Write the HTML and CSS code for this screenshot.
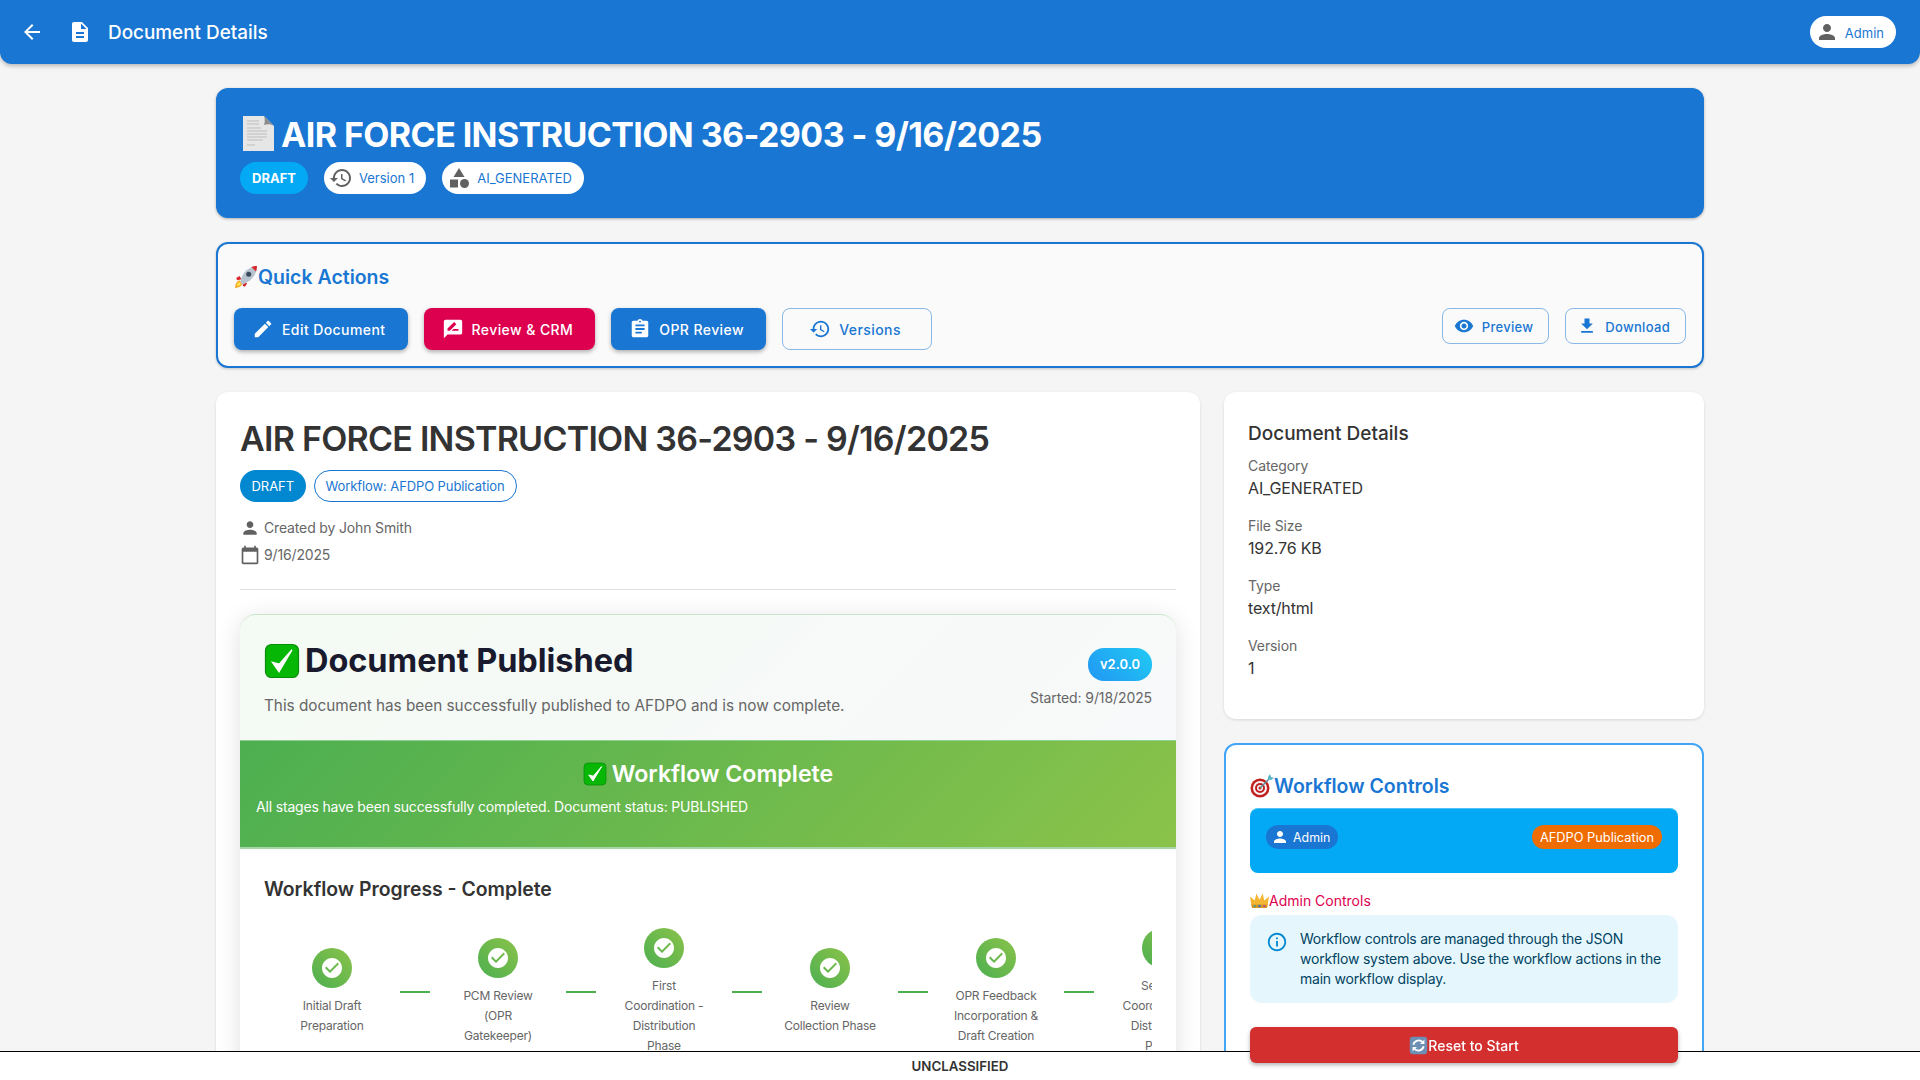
FILE: index.html
```html
<!DOCTYPE html>
<html lang="en">
<head>
  <meta charset="UTF-8">
  <title>Document Details</title>
  <link rel="stylesheet" href="styles.css">
</head>
<body>
  <svg class="sprites" xmlns="http://www.w3.org/2000/svg">
    <symbol id="i-back" viewBox="0 0 24 24"><path d="M20 11H7.83l5.59-5.59L12 4l-8 8 8 8 1.41-1.41L7.83 13H20v-2z"/></symbol>
    <symbol id="i-doc" viewBox="0 0 24 24"><path d="M14 2H6c-1.1 0-1.99.9-1.99 2L4 20c0 1.1.89 2 1.99 2H18c1.1 0 2-.9 2-2V8l-6-6zm2 16H8v-2h8v2zm0-4H8v-2h8v2zm-3-5V3.5L18.5 9H13z"/></symbol>
    <symbol id="i-person" viewBox="0 0 24 24"><path d="M12 12c2.21 0 4-1.79 4-4s-1.79-4-4-4-4 1.79-4 4 1.79 4 4 4zm0 2c-2.67 0-8 1.34-8 4v2h16v-2c0-2.66-5.33-4-8-4z"/></symbol>
    <symbol id="i-history" viewBox="0 0 24 24"><path d="M13 3c-4.97 0-9 4.03-9 9H1l3.89 3.89.07.14L9 12H6c0-3.87 3.13-7 7-7s7 3.13 7 7-3.13 7-7 7c-1.93 0-3.68-.79-4.94-2.06l-1.42 1.42C8.27 19.99 10.51 21 13 21c4.97 0 9-4.03 9-9s-4.03-9-9-9zm-1 5v5l4.28 2.54.72-1.21-3.5-2.08V8H12z"/></symbol>
    <symbol id="i-category" viewBox="0 0 24 24"><path d="M12 2l-5.5 9h11z"/><circle cx="17.5" cy="17.5" r="4.5"/><path d="M3 13.5h8v8H3z"/></symbol>
    <symbol id="i-edit" viewBox="0 0 24 24"><path d="M3 17.25V21h3.75L17.81 9.94l-3.75-3.75L3 17.25zM20.71 7.04c.39-.39.39-1.02 0-1.41l-2.34-2.34c-.39-.39-1.02-.39-1.41 0l-1.83 1.83 3.75 3.75 1.83-1.83z"/></symbol>
    <symbol id="i-review" viewBox="0 0 24 24"><path d="M20 2H4c-1.1 0-1.99.9-1.99 2L2 22l4-4h14c1.1 0 2-.9 2-2V4c0-1.1-.9-2-2-2zM6 14v-2.47l6.88-6.88c.2-.2.51-.2.71 0l1.77 1.77c.2.2.2.51 0 .71L8.47 14H6zm12 0h-7.5l2-2H18v2z"/></symbol>
    <symbol id="i-assignment" viewBox="0 0 24 24"><path d="M19 3h-4.18C14.4 1.84 13.3 1 12 1c-1.3 0-2.4.84-2.82 2H5c-1.1 0-2 .9-2 2v14c0 1.1.9 2 2 2h14c1.1 0 2-.9 2-2V5c0-1.1-.9-2-2-2zm-7 0c.55 0 1 .45 1 1s-.45 1-1 1-1-.45-1-1 .45-1 1-1zm2 14H7v-2h7v2zm3-4H7v-2h10v2zm0-4H7V7h10v2z"/></symbol>
    <symbol id="i-eye" viewBox="0 0 24 24"><path d="M12 4.5C7 4.5 2.73 7.61 1 12c1.73 4.39 6 7.5 11 7.5s9.27-3.11 11-7.5c-1.73-4.39-6-7.5-11-7.5zM12 17c-2.76 0-5-2.24-5-5s2.24-5 5-5 5 2.24 5 5-2.24 5-5 5zm0-8c-1.66 0-3 1.34-3 3s1.34 3 3 3 3-1.34 3-3-1.34-3-3-3z"/></symbol>
    <symbol id="i-download" viewBox="0 0 24 24"><path d="M5 20h14v-2H5v2zM19 9h-4V3H9v6H5l7 7 7-7z"/></symbol>
    <symbol id="i-calendar" viewBox="0 0 24 24"><path d="M20 3h-1V1h-2v2H7V1H5v2H4c-1.1 0-2 .9-2 2v16c0 1.1.9 2 2 2h16c1.1 0 2-.9 2-2V5c0-1.1-.9-2-2-2zm0 18H4V8h16v13z"/></symbol>
    <symbol id="i-info" viewBox="0 0 24 24"><path d="M11 7h2v2h-2zm0 4h2v6h-2zm1-9C6.48 2 2 6.48 2 12s4.48 10 10 10 10-4.48 10-10S17.52 2 12 2zm0 18c-4.41 0-8-3.59-8-8s3.59-8 8-8 8 3.59 8 8-3.59 8-8 8z"/></symbol>
    <symbol id="i-check" viewBox="0 0 24 24"><path d="M12 2C6.48 2 2 6.48 2 12s4.48 10 10 10 10-4.48 10-10S17.52 2 12 2zm-2 15l-5-5 1.41-1.41L10 14.17l7.59-7.59L19 8l-9 9z"/></symbol>

    <symbol id="e-page" viewBox="0 0 36 36">
      <path d="M3 1h21l10 10v25H3z" fill="#e6e6e6"/>
      <path d="M24 1l10 10c-3-2-7-2-10-1 1-3 1-6 0-9z" fill="#8c8c8c"/>
      <path d="M7 6h12M7 9h12M7 13h14M7 16h20M7 19h20M7 22h20M7 25h16M7 30h8" stroke="#bdbdbd" stroke-width="1"/>
    </symbol>
    <symbol id="e-box" viewBox="0 0 24 24">
      <rect x="1" y="1" width="22" height="22" rx="4" fill="#06b706" stroke="#0a8f0a" stroke-width=".8"/>
      <path d="M5.8 13l4.2 6L18.6 4.6l-8.4 9.6z" fill="#fff" stroke="#fff" stroke-width="1"/>
    </symbol>
    <symbol id="e-rocket" viewBox="1 1 22 22">
      <path d="M2 22c0-4 2-6 4-7l3 3c-1 2-3 4-7 4z" fill="#f6a623"/>
      <path d="M3.500 20.500c0-2 1-3.500 2.500-4l1.500 1.500c-.5 1.500-2 2.500-4 2.500z" fill="#ffe14d"/>
      <path d="M6 11l-3 2 1 2 4-1zM13 18l-2 3-2-1 1-4z" fill="#d8262c"/>
      <path d="M7 17c0-6 5-14 15-15 0 10-8 15-13 17z" fill="#b7c3cf"/>
      <path d="M17 2.800c1.500-.5 3.500-.8 5-.8 0 2-.3 3.500-.8 5z" fill="#d8262c"/>
      <circle cx="14.500" cy="9.500" r="2.300" fill="#3a4a5a"/>
    </symbol>
    <symbol id="e-target" viewBox="0 0 24 24">
      <circle cx="10" cy="14" r="9.500" fill="#c2201f"/>
      <circle cx="10" cy="14" r="7" fill="#f4f4f4"/>
      <circle cx="10" cy="14" r="5" fill="#c2201f"/>
      <circle cx="10" cy="14" r="3" fill="#f4f4f4"/>
      <circle cx="10" cy="14" r="1.500" fill="#c2201f"/>
      <path d="M10 14L20 4" stroke="#5b8f9c" stroke-width="1.500"/>
      <path d="M18 3l2-3 1 3 3 1-3 2-3-1z" fill="#54b6c4"/>
    </symbol>
    <symbol id="e-crown" viewBox="0 0 24 24">
      <path d="M2 20L0 7l6 5 2-9 4 8 4-8 2 9 6-5-2 13z" fill="#f2b632"/>
      <path d="M2 17h20l-.5 4.500h-19z" fill="#d2962a"/>
      <circle cx="6" cy="19" r="1.300" fill="#2aa198"/><circle cx="12" cy="19" r="1.500" fill="#2f6fd0"/><circle cx="18" cy="19" r="1.300" fill="#c23a8a"/>
    </symbol>
    <symbol id="e-refresh" viewBox="0 0 24 24">
      <rect x="1" y="1" width="22" height="22" rx="4" fill="#6c8fb3"/>
      <path d="M5.500 11a6.800 6.800 0 0 1 12-2.800M18.500 13a6.800 6.800 0 0 1-12 2.800" fill="none" stroke="#fff" stroke-width="2.300"/>
      <path d="M19.500 4.500v5.500h-5.500zM4.500 19.500V14h5.500z" fill="#fff"/>
    </symbol>
  </svg>

  <header class="topbar">
    <button class="topbar-back"><svg class="ic ic-24"><use href="#i-back"/></svg></button>
    <svg class="ic ic-24 topbar-doc"><use href="#i-doc"/></svg>
    <div class="topbar-title">Document Details</div>
    <div class="chip chip-white topbar-user"><svg class="ic ic-24 gray"><use href="#i-person"/></svg><span>Admin</span></div>
  </header>

  <main class="container">
    <section class="hero">
      <h1 class="hero-title"><svg class="emoji hero-emoji"><use href="#e-page"/></svg>AIR FORCE INSTRUCTION 36-2903 - 9/16/2025</h1>
      <div class="chip-row hero-chips">
        <div class="chip chip-draft">DRAFT</div>
        <div class="chip chip-white"><svg class="ic ic-24 gray"><use href="#i-history"/></svg><span>Version 1</span></div>
        <div class="chip chip-white"><svg class="ic ic-24 gray"><use href="#i-category"/></svg><span>AI_GENERATED</span></div>
      </div>
    </section>

    <section class="quick">
      <h2 class="quick-title"><svg class="emoji emoji-24"><use href="#e-rocket"/></svg>Quick Actions</h2>
      <div class="quick-row">
        <div class="btn-group">
          <button class="btn btn-lg btn-blue"><svg class="ic ic-22"><use href="#i-edit"/></svg>Edit Document</button>
          <button class="btn btn-lg btn-pink"><svg class="ic ic-22"><use href="#i-review"/></svg>Review &amp; CRM</button>
          <button class="btn btn-lg btn-blue"><svg class="ic ic-22"><use href="#i-assignment"/></svg>OPR Review</button>
          <button class="btn btn-lg btn-line btn-wide"><svg class="ic ic-22"><use href="#i-history"/></svg>Versions</button>
        </div>
        <div class="btn-group">
          <button class="btn btn-md btn-line"><svg class="ic ic-20"><use href="#i-eye"/></svg>Preview</button>
          <button class="btn btn-md btn-line"><svg class="ic ic-20"><use href="#i-download"/></svg>Download</button>
        </div>
      </div>
    </section>

    <div class="columns">
      <section class="card doc-card">
        <h2 class="doc-title">AIR FORCE INSTRUCTION 36-2903 - 9/16/2025</h2>
        <div class="chip-row doc-chips">
          <div class="chip chip-status">DRAFT</div>
          <div class="chip chip-outline">Workflow: AFDPO Publication</div>
        </div>
        <div class="meta-line"><svg class="ic ic-20 gray"><use href="#i-person"/></svg>Created by John Smith</div>
        <div class="meta-line"><svg class="ic ic-20 gray"><use href="#i-calendar"/></svg>9/16/2025</div>
        <div class="divider"></div>

        <div class="published">
          <div class="published-head">
            <div>
              <h3 class="published-title"><svg class="emoji emoji-36"><use href="#e-box"/></svg>Document Published</h3>
              <p class="published-sub">This document has been successfully published to AFDPO and is now complete.</p>
            </div>
            <div class="published-side">
              <div class="version-pill">v2.0.0</div>
              <div class="published-date">Started: 9/18/2025</div>
            </div>
          </div>

          <div class="banner">
            <div class="banner-title"><svg class="emoji emoji-24"><use href="#e-box"/></svg>Workflow Complete</div>
            <p class="banner-text">All stages have been successfully completed. Document status: PUBLISHED</p>
          </div>

          <div class="progress">
            <h4 class="progress-title">Workflow Progress - Complete</h4>
            <div class="stages">
              <div class="stage"><div class="stage-dot"><svg class="ic ic-24"><use href="#i-check"/></svg></div><div class="stage-name">Initial Draft Preparation</div></div>
              <div class="stage-link"></div>
              <div class="stage"><div class="stage-dot"><svg class="ic ic-24"><use href="#i-check"/></svg></div><div class="stage-name">PCM Review (OPR Gatekeeper)</div></div>
              <div class="stage-link"></div>
              <div class="stage"><div class="stage-dot"><svg class="ic ic-24"><use href="#i-check"/></svg></div><div class="stage-name">First Coordination - Distribution Phase</div></div>
              <div class="stage-link"></div>
              <div class="stage"><div class="stage-dot"><svg class="ic ic-24"><use href="#i-check"/></svg></div><div class="stage-name">Review Collection Phase</div></div>
              <div class="stage-link"></div>
              <div class="stage"><div class="stage-dot"><svg class="ic ic-24"><use href="#i-check"/></svg></div><div class="stage-name">OPR Feedback Incorporation &amp; Draft Creation</div></div>
              <div class="stage-link"></div>
              <div class="stage"><div class="stage-dot"><svg class="ic ic-24"><use href="#i-check"/></svg></div><div class="stage-name">Second Coordination - Distribution Phase</div></div>
            </div>
          </div>
        </div>
      </section>

      <aside class="side">
        <section class="card details">
          <h3 class="details-title">Document Details</h3>
          <div class="field"><div class="field-label">Category</div><div class="field-value">AI_GENERATED</div></div>
          <div class="field"><div class="field-label">File Size</div><div class="field-value">192.76 KB</div></div>
          <div class="field"><div class="field-label">Type</div><div class="field-value">text/html</div></div>
          <div class="field"><div class="field-label">Version</div><div class="field-value">1</div></div>
        </section>

        <section class="controls">
          <h3 class="controls-title"><svg class="emoji emoji-24"><use href="#e-target"/></svg>Workflow Controls</h3>
          <div class="controls-box">
            <div class="chip chip-sm chip-role"><svg class="ic ic-18"><use href="#i-person"/></svg><span>Admin</span></div>
            <div class="chip chip-sm chip-flow">AFDPO Publication</div>
          </div>
          <div class="admin-label"><svg class="emoji emoji-18"><use href="#e-crown"/></svg>Admin Controls</div>
          <div class="alert">
            <svg class="ic ic-22 alert-icon"><use href="#i-info"/></svg>
            <p>Workflow controls are managed through the JSON workflow system above. Use the workflow actions in the main workflow display.</p>
          </div>
          <button class="reset-btn"><svg class="emoji emoji-18"><use href="#e-refresh"/></svg>Reset to Start</button>
        </section>
      </aside>
    </div>
  </main>

  <footer class="classbar">UNCLASSIFIED</footer>
</body>
</html>
```

FILE: styles.css
```css
* {
  box-sizing: border-box;
}

html, body {
  height: 100%;
  overflow: hidden;
}

body {
  margin: 0;
  background: #f5f5f5;
  color: #333;
  font-family: "Inter", "Noto Sans", sans-serif;
  font-size: 14px;
}

h1, h2, h3, h4, p {
  margin: 0;
}

button {
  font-family: inherit;
  border: none;
  cursor: pointer;
}

.sprites {
  display: none;
}

/* iconos */
.ic {
  fill: currentColor;
  flex: none;
  display: block;
}
.ic-18 { width: 18px; height: 18px; }
.ic-20 { width: 20px; height: 20px; }
.ic-22 { width: 22px; height: 22px; }
.ic-24 { width: 24px; height: 24px; }
.gray { color: #616161; }

.emoji {
  flex: none;
  display: inline-block;
  vertical-align: middle;
}
.emoji-18 { width: 19px; height: 19px; }
.emoji-24 { width: 24px; height: 24px; }
.emoji-36 { width: 36px; height: 36px; }

/* barra superior */
.topbar {
  height: 64px;
  display: flex;
  align-items: center;
  padding: 0 24px 0 20px;
  background: #1976d2;
  color: #fff;
  border-radius: 0 0 12px 12px;
  box-shadow: 0 2px 4px rgba(0, 0, 0, 0.25);
}

.topbar-back {
  background: none;
  color: #fff;
  padding: 0;
  width: 24px;
  height: 24px;
}

.topbar-doc {
  margin-left: 24px;
}

.topbar-title {
  margin-left: 16px;
  padding-top: 1px;
  font-size: 18.9px;
  font-weight: 500;
  flex: 1;
}

/* chips */
.chip {
  display: inline-flex;
  align-items: center;
  height: 32px;
  border-radius: 16px;
  font-size: 13px;
  white-space: nowrap;
}

.chip-row {
  display: flex;
  gap: 16px;
}

.chip-white {
  background: #fff;
  color: #1976d2;
  padding: 0 12px 0 5px;
  gap: 6px;
}

.topbar-user span {
  padding-top: 1px;
}

.chip-draft {
  background: #03a9f4;
  color: #fff;
  font-size: 13px;
  font-weight: 700;
  padding: 0 12px;
}

.chip-status {
  background: #0288d1;
  color: #fff;
  padding: 0 11.5px;
  letter-spacing: -0.05px;
}

.chip-outline {
  border: 1px solid #1976d2;
  color: #1976d2;
  padding: 0 11px;
  letter-spacing: -0.1px;
}

.chip-sm {
  height: 24px;
  border-radius: 12px;
  color: #fff;
}

.chip-role {
  background: #1976d2;
  padding: 0 8px 0 5px;
  gap: 4px;
  font-size: 12.4px;
}

.chip-flow {
  background: #ef6c00;
  padding: 0 8px;
  font-size: 12.8px;
}

/* contenido */
.container {
  width: 1536px;
  height: calc(100vh - 64px);
  margin: 0 auto;
  padding: 24px;
  overflow: hidden;
}

.hero {
  height: 130px;
  padding: 24px;
  background: #1976d2;
  color: #fff;
  border-radius: 12px;
  box-shadow: 0 1px 3px rgba(0, 0, 0, 0.3);
}

.hero-title {
  display: flex;
  align-items: center;
  gap: 5px;
  height: 44px;
  padding-top: 1px;
  font-size: 34px;
  line-height: 44px;
  font-weight: 700;
  letter-spacing: -0.6px;
}

.hero-emoji {
  width: 36px;
  height: 36px;
  margin-top: -4px;
}

.hero-chips {
  margin-top: 6px;
}

.quick {
  height: 126px;
  margin-top: 24px;
  padding: 16px;
  background: #fafafa;
  border: 2px solid #1976d2;
  border-radius: 12px;
  box-shadow: 0 1px 3px rgba(0, 0, 0, 0.2);
}

.quick-title {
  display: flex;
  align-items: center;
  height: 32px;
  padding-top: 1px;
  margin-bottom: 16px;
  font-size: 19.5px;
  font-weight: 600;
  color: #1976d2;
}

.quick-row {
  display: flex;
  justify-content: space-between;
  align-items: flex-start;
}

.btn-group {
  display: flex;
  gap: 16px;
}

.btn {
  display: flex;
  align-items: center;
  justify-content: center;
  gap: 8px;
  border-radius: 8px;
  font-size: 14px;
  font-weight: 500;
  letter-spacing: 0.42px;
  white-space: nowrap;
}

.btn-lg {
  height: 42px;
  padding: 0 22px 0 18px;
}

.btn-md {
  height: 36px;
  padding: 1px 15px 0 11px;
  font-size: 13px;
  letter-spacing: 0.3px;
}

.btn-md .ic {
  margin-top: -1px;
}

.btn-wide {
  width: 150px;
}

.btn-blue {
  background: #1976d2;
  color: #fff;
  box-shadow: 0 2px 4px rgba(0, 0, 0, 0.3);
}

.btn-pink {
  background: #dc004e;
  color: #fff;
  box-shadow: 0 2px 4px rgba(0, 0, 0, 0.3);
}

.btn-line {
  background: transparent;
  color: #1976d2;
  border: 1px solid rgba(25, 118, 210, 0.5);
}

.columns {
  display: grid;
  grid-template-columns: 984px 480px;
  gap: 24px;
  margin-top: 24px;
}

.card {
  background: #fff;
  border-radius: 12px;
  box-shadow: 0 1px 3px rgba(0, 0, 0, 0.12);
}

.doc-card {
  padding: 24px;
}

.doc-title {
  height: 44px;
  padding-top: 1px;
  font-size: 34px;
  line-height: 44px;
  font-weight: 600;
  letter-spacing: -0.75px;
  color: #333;
}

.doc-chips {
  margin-top: 10px;
  gap: 8px;
}

.meta-line {
  display: flex;
  align-items: center;
  gap: 4px;
  height: 27px;
  color: #666;
  letter-spacing: -0.15px;
}

.doc-chips + .meta-line {
  margin-top: 12px;
}

.divider {
  height: 1px;
  margin-top: 21px;
  background: #e0e0e0;
}

/* tarjeta de flujo */
.published {
  margin-top: 24px;
  background: #fff;
  border-radius: 16px 16px 0 0;
  box-shadow: 0 4px 24px rgba(0, 0, 0, 0.12);
}

.published-head {
  display: flex;
  justify-content: space-between;
  height: 126px;
  padding: 24px;
  background: linear-gradient(135deg, #f4faf4, #f8f9fa);
  border-top: 1px solid #c8e6c9;
  border-radius: 16px 16px 0 0;
}

.published-title {
  display: flex;
  align-items: center;
  gap: 5px;
  height: 44px;
  font-size: 32.5px;
  line-height: 44px;
  font-weight: 700;
  letter-spacing: -0.05px;
  color: #1a1a2e;
}

.published-sub {
  margin-top: 11px;
  font-size: 15.3px;
  line-height: 24px;
  color: #666;
}

.published-side {
  display: flex;
  flex-direction: column;
  align-items: flex-end;
  padding-top: 9px;
}

.version-pill {
  height: 33px;
  padding: 0 12px;
  border-radius: 16px;
  background: linear-gradient(45deg, #2196f3, #21cbf3);
  color: #fff;
  font-size: 13px;
  font-weight: 600;
  line-height: 33px;
}

.published-date {
  margin-top: 7px;
  font-size: 14px;
  line-height: 20px;
  letter-spacing: -0.1px;
  color: #666;
}

.banner {
  height: 109px;
  padding: 16px 16px 0;
  background: linear-gradient(135deg, #4caf50, #8bc34a);
  border-top: 1px solid #8fd193;
  border-bottom: 2px solid #a5d6a7;
  color: #fff;
}

.banner-title {
  display: flex;
  align-items: center;
  justify-content: center;
  gap: 5px;
  height: 34px;
  font-size: 23.2px;
  font-weight: 600;
}

.banner-text {
  margin-top: 4px;
  font-size: 14px;
  line-height: 24px;
  letter-spacing: -0.17px;
}

.progress {
  padding: 24px;
}

.progress-title {
  height: 32px;
  font-size: 19.4px;
  line-height: 32px;
  font-weight: 600;
  color: #333;
}

.stages {
  display: flex;
  align-items: center;
  margin-top: 15px;
  padding: 8px;
  overflow: hidden;
}

.stage {
  flex: none;
  width: 120px;
  padding: 0 12px;
  text-align: center;
}

.stage-dot {
  width: 40px;
  height: 40px;
  margin: 0 auto 8px;
  display: flex;
  align-items: center;
  justify-content: center;
  border-radius: 50%;
  background: linear-gradient(45deg, #4caf50, #8bc34a);
  color: #fff;
}

.stage-name {
  font-size: 12px;
  line-height: 20px;
  letter-spacing: -0.2px;
  color: #666;
}

.stage-link {
  flex: none;
  width: 30px;
  height: 2px;
  margin: 0 8px;
  background: #4caf50;
}

/* columna derecha */
.details {
  height: 327px;
  padding: 29px 24px 0;
}

.details-title {
  height: 26px;
  font-size: 19px;
  line-height: 26px;
  font-weight: 500;
  color: #333;
  margin-bottom: 9px;
}

.field {
  margin-bottom: 16px;
}

.field-label {
  height: 20px;
  font-size: 14px;
  line-height: 20px;
  letter-spacing: -0.1px;
  color: #666;
}

.field-value {
  height: 24px;
  font-size: 16px;
  line-height: 24px;
  letter-spacing: -0.15px;
  color: #333;
}

.controls {
  margin-top: 24px;
  padding: 24px;
  background: #fff;
  border: 2px solid #42a5f5;
  border-radius: 12px;
}

.controls-title {
  display: flex;
  align-items: center;
  height: 32px;
  margin-top: 1px;
  font-size: 19.5px;
  font-weight: 600;
  color: #1976d2;
}

.controls-box {
  display: flex;
  justify-content: space-between;
  height: 65px;
  margin-top: 6px;
  padding: 16px;
  background: #03a9f4;
  border-top: 1px solid #4fc3f7;
  border-radius: 8px;
}

.admin-label {
  display: flex;
  align-items: center;
  height: 20px;
  margin-top: 17px;
  font-size: 14px;
  font-weight: 400;
  color: #dc004e;
}

.alert {
  display: flex;
  gap: 12px;
  height: 88px;
  margin-top: 5px;
  padding: 14px 16px;
  background: #e5f6fd;
  border-radius: 12px;
  color: #014361;
}

.alert-icon {
  color: #0288d1;
  margin-top: 2px;
}

.alert p {
  font-size: 14px;
  line-height: 20px;
  letter-spacing: -0.22px;
}

.reset-btn {
  position: relative;
  z-index: 3;
  display: flex;
  align-items: center;
  justify-content: center;
  width: 100%;
  height: 36px;
  margin-top: 24px;
  background: #d32f2f;
  color: #fff;
  border-radius: 6px;
  font-size: 14px;
  font-weight: 500;
  box-shadow: 0 2px 4px rgba(0, 0, 0, 0.3);
}

/* franja de clasificacion */
.classbar {
  position: fixed;
  left: 0;
  right: 0;
  bottom: 0;
  z-index: 2;
  height: 29px;
  background: #fff;
  border-top: 1px solid #000;
  text-align: center;
  font-size: 13.3px;
  font-weight: 600;
  line-height: 28px;
  color: #333;
}
```
